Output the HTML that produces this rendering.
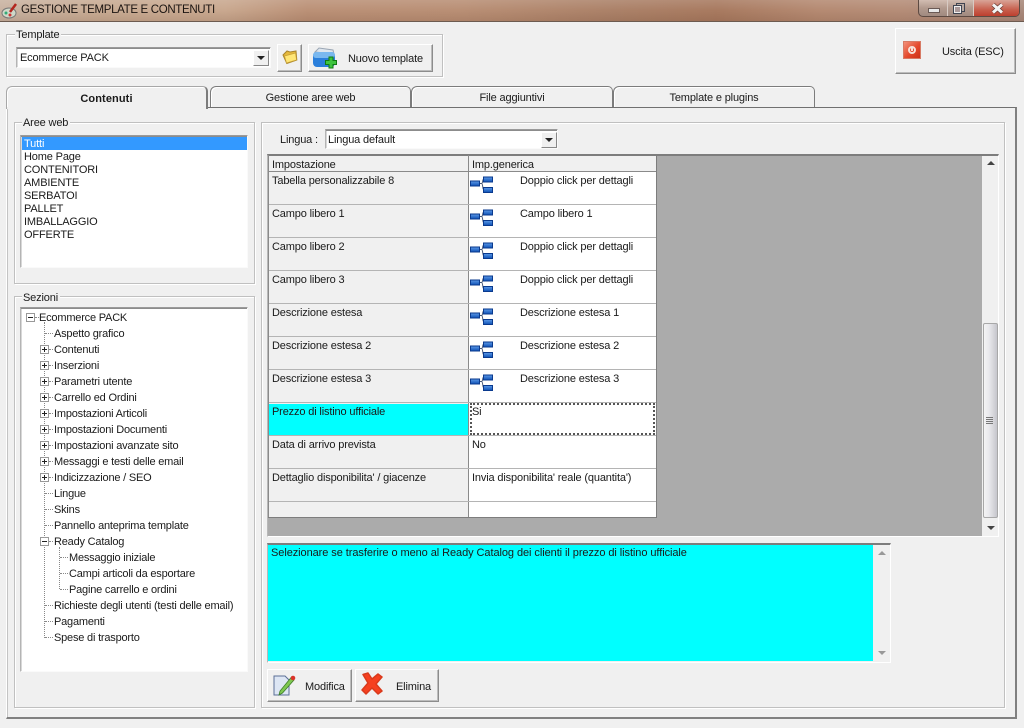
<!DOCTYPE html>
<html><head><meta charset="utf-8"><title>GESTIONE TEMPLATE E CONTENUTI</title>
<style>
html,body{margin:0;padding:0;width:1024px;height:728px;overflow:hidden;background:#f0f0f0}
body{position:relative;font:11px/13px "Liberation Sans",sans-serif;color:#1a1a1a;letter-spacing:-.15px}
div,span.t,svg{position:absolute}
.t{position:absolute;white-space:nowrap;line-height:13px;margin-top:1px}
.tr{letter-spacing:-.2px}
.grp{border:1px solid #c0c0c0;box-shadow:1px 1px 0 #fff,inset 1px 1px 0 #fff;box-sizing:border-box}
.lg{position:absolute;background:#f0f0f0;padding:0 2px 0 1px;white-space:nowrap;line-height:13px;margin-top:1px}
.sunk{background:#fff;box-sizing:border-box;border:1px solid;border-color:#9a9a9a #fafafa #fafafa #b4b4b4;box-shadow:inset 0 1px 0 #8c8c8c,inset 1px 0 0 #d8d8d8}
.btn{background:#f0f0f0;box-sizing:border-box;border:1px solid;border-color:#fff #8c8c8c #8c8c8c #fff;box-shadow:inset -1px -1px 0 #bcbcbc}
.arrow{width:0;height:0;border-left:4px solid transparent;border-right:4px solid transparent;border-top:4px solid #222}
.cbtn{background:#f0f0f0;box-sizing:border-box;border:1px solid;border-color:#fff #888 #888 #fff}
.tab{box-sizing:border-box;background:#f0f0f0;border:1px solid #7c7c7c;border-bottom:none;border-radius:6px 5px 0 0;text-align:center;line-height:23px;box-shadow:inset 1px 1px 0 #fff}
.h{background:#b4b4b4;height:1px}
.v{background:#b4b4b4;width:1px}
.dv{border-left:1px dotted #888;width:0}
.dh{border-top:1px dotted #888;height:0}
.pm{box-sizing:border-box;width:9px;height:9px;border:1px solid #999;background:#fff}
.pm:before{content:"";position:absolute;left:1px;top:3px;width:5px;height:1px;background:#222}
.pl:after{content:"";position:absolute;left:3px;top:1px;width:1px;height:5px;background:#222}
</style></head><body>

<svg width="0" height="0" style="left:0;top:0"><defs>
<linearGradient id="bb" x1="0" y1="0" x2="0" y2="1"><stop offset="0" stop-color="#5f9be8"/><stop offset="1" stop-color="#0c4fb4"/></linearGradient>
<g id="nodes">
<path d="M9.500 9.500h2C13 9.500 12.500 5 13.500 5.500M11.500 9.500C13 9.500 12.500 15 13.500 15.500" fill="none" stroke="#4a5a78" stroke-width="1"/>
<rect x=".5" y="7" width="9" height="5" fill="url(#bb)" stroke="#0a3a8e"/>
<rect x="13.500" y="3" width="9" height="5" fill="url(#bb)" stroke="#0a3a8e"/>
<rect x="13.500" y="13.500" width="9" height="5" fill="url(#bb)" stroke="#0a3a8e"/>
</g></defs></svg>

<!-- title bar -->
<div style="left:0;top:0;width:1024px;height:21px;background:linear-gradient(90deg,#c9b3a2 0,#c8ab93 10%,#c9a88f 22%,#bb9177 30%,#b98f75 45%,#ab8168 60%,#a87a60 70%,#b58a72 80%,#b58d78 88%,#a98a7c 100%)"></div>
<div style="left:0;top:0;width:1024px;height:21px;background:linear-gradient(180deg,rgba(255,255,255,.12),rgba(255,255,255,0) 50%,rgba(80,40,20,.12))"></div>
<div style="left:0;top:21px;width:1024px;height:1px;background:#6d5b50"></div>
<svg style="left:1px;top:2px" width="18" height="18" viewBox="0 0 18 18"><ellipse cx="8" cy="11" rx="7" ry="5" fill="#cfd8c8" stroke="#777"/><circle cx="5" cy="11" r="1.5" fill="#3a7"/><circle cx="9" cy="13" r="1.5" fill="#c33"/><path d="M9 10L15 2" stroke="#b3261e" stroke-width="2.5"/></svg>
<span class="t" style="left:21px;top:3px;font-size:11.5px;color:#1b1411;letter-spacing:-.33px">GESTIONE TEMPLATE E CONTENUTI</span>
<div style="left:918px;top:0;width:102px;height:17px;box-sizing:border-box;border:1px solid #5d4a42;border-top:none;border-radius:0 0 5px 5px;overflow:hidden;background:linear-gradient(180deg,#d2bdb2,#b29a8e 50%,#a08a80)">
<div style="left:28px;top:0;width:1px;height:17px;background:#d8cbc4"></div>
<div style="left:54px;top:0;width:1px;height:17px;background:#d8cbc4"></div>
<div style="left:55px;top:0;width:46px;height:17px;background:linear-gradient(180deg,#d9a497,#c8614f 55%,#bb3a2a)"></div>
<div style="left:9px;top:8px;width:12px;height:5px;background:#e8e8e8;border:1px solid #6a5a55;box-sizing:border-box"></div>
<div style="left:37px;top:3px;width:9px;height:9px;border:1px solid #3f4450;background:#b9aaa2;box-sizing:border-box"></div>
<div style="left:34px;top:5px;width:9px;height:9px;border:1px solid #3f4450;box-shadow:inset 0 0 0 1px #eee;background:#a99;box-sizing:border-box"></div>
</div>
<svg style="left:990px;top:3px" width="15" height="11" viewBox="0 0 15 11"><path d="M3 1.500L12 9.500M12 1.500L3 9.500" stroke="#6b3d34" stroke-width="4.500"/><path d="M3 1.500L12 9.500M12 1.500L3 9.500" stroke="#f4f4f4" stroke-width="3"/></svg>

<!-- template group -->
<div class="grp" style="left:6px;top:34px;width:437px;height:43px"></div>
<span class="lg" style="left:15px;top:28px">Template</span>
<div class="sunk" style="left:16px;top:47px;width:255px;height:21px"></div>
<span class="t" style="left:20px;top:51px">Ecommerce PACK</span>
<div class="cbtn" style="left:253px;top:50px;width:16px;height:16px"><div class="arrow" style="left:3px;top:5px"></div></div>
<div class="btn" style="left:277px;top:44px;width:25px;height:28px"></div>
<svg style="left:282px;top:49px" width="16" height="16" viewBox="0 0 16 16"><path d="M1 6L5 2l3 1 6-1 .8 9-10 3.500z" fill="#e6b93c" stroke="#a8842c"/><path d="M2.500 7L13.500 4l1 7L4.500 14z" fill="#ffe675" stroke="#c79f35" stroke-width=".7"/></svg>
<div class="btn" style="left:308px;top:44px;width:125px;height:28px"></div>
<svg style="left:312px;top:46px" width="25" height="23" viewBox="0 0 25 23"><path d="M3 6L7 2l14 2 1 4z" fill="#dfe6ee" stroke="#9aa6b4"/><rect x="1" y="6" width="22" height="15" rx="4" fill="#2b7fdb"/><rect x="1" y="6" width="22" height="6" rx="3" fill="#7ab8ef"/><path d="M17 11h4v3.500h3.500v4H21V22h-4v-3.500h-3.500v-4H17z" fill="#3ec43e" stroke="#127a12"/></svg>
<span class="t" style="left:348px;top:52px">Nuovo template</span>

<!-- exit -->
<div class="btn" style="left:895px;top:28px;width:121px;height:46px"></div>
<div style="left:903px;top:41px;width:18px;height:18px;background:linear-gradient(135deg,#f2907a,#e4492c 55%,#cc3017);border:1px solid #d77a64;box-sizing:border-box"></div>
<div style="left:908px;top:46px;width:8px;height:8px;border:2px solid #f6e0d8;border-radius:50%;box-sizing:border-box"></div>
<div style="left:911px;top:47px;width:2px;height:4px;background:#f6e0d8"></div>
<span class="t" style="left:942px;top:45px">Uscita (ESC)</span>

<!-- page panel -->
<div style="left:6px;top:107px;width:1011px;height:612px;box-sizing:border-box;border:1px solid #fff;border-top-color:#707070;border-right:2px solid #808080;border-bottom:2px solid #808080;box-shadow:inset 1px 0 0 #c4c4c4"></div>
<div class="tab" style="left:210px;top:86px;width:201px;height:21px">Gestione aree web</div>
<div class="tab" style="left:411px;top:86px;width:202px;height:21px">File aggiuntivi</div>
<div class="tab" style="left:613px;top:86px;width:202px;height:21px">Template e plugins</div>
<div class="tab" style="left:6px;top:86px;width:202px;height:23px;font-weight:bold;letter-spacing:.1px;border-right:2px solid #7c7c7c;border-color:#a8a8a8 #7c7c7c #a8a8a8 #a8a8a8;line-height:24px">Contenuti</div>
<div style="left:7px;top:107px;width:199px;height:2px;background:#f0f0f0"></div>

<!-- aree web -->
<div class="grp" style="left:14px;top:122px;width:241px;height:162px"></div>
<span class="lg" style="left:22px;top:116px">Aree web</span>
<div class="sunk" style="left:20px;top:135px;width:228px;height:133px"></div>
<div style="left:22px;top:137px;width:225px;height:13px;background:#3399ff"></div>
<span class="t" style="left:24px;top:137px;color:#fff">Tutti</span>
<span class="t" style="left:24px;top:150px">Home Page</span>
<span class="t" style="left:24px;top:163px">CONTENITORI</span>
<span class="t" style="left:24px;top:176px">AMBIENTE</span>
<span class="t" style="left:24px;top:189px">SERBATOI</span>
<span class="t" style="left:24px;top:202px">PALLET</span>
<span class="t" style="left:24px;top:215px">IMBALLAGGIO</span>
<span class="t" style="left:24px;top:228px">OFFERTE</span>

<!-- sezioni -->
<div class="grp" style="left:14px;top:296px;width:241px;height:412px"></div>
<span class="lg" style="left:22px;top:291px">Sezioni</span>
<div class="sunk" style="left:20px;top:307px;width:228px;height:365px"></div>
<div class="dv" style="left:44px;top:322px;height:316px"></div>
<div class="dv" style="left:59px;top:547px;height:42px"></div>
<div class="dh" style="left:35px;top:317px;width:4px"></div>
<div class="dh" style="left:45px;top:333px;width:8px"></div><div class="dh" style="left:49px;top:349px;width:4px"></div><div class="dh" style="left:49px;top:365px;width:4px"></div><div class="dh" style="left:49px;top:381px;width:4px"></div><div class="dh" style="left:49px;top:397px;width:4px"></div><div class="dh" style="left:49px;top:413px;width:4px"></div><div class="dh" style="left:49px;top:429px;width:4px"></div><div class="dh" style="left:49px;top:445px;width:4px"></div><div class="dh" style="left:49px;top:461px;width:4px"></div><div class="dh" style="left:49px;top:477px;width:4px"></div>
<div class="dh" style="left:45px;top:493px;width:8px"></div><div class="dh" style="left:45px;top:509px;width:8px"></div><div class="dh" style="left:45px;top:525px;width:8px"></div><div class="dh" style="left:49px;top:541px;width:4px"></div>
<div class="dh" style="left:60px;top:557px;width:8px"></div><div class="dh" style="left:60px;top:573px;width:8px"></div><div class="dh" style="left:60px;top:589px;width:8px"></div>
<div class="dh" style="left:45px;top:605px;width:8px"></div><div class="dh" style="left:45px;top:621px;width:8px"></div><div class="dh" style="left:45px;top:637px;width:8px"></div>
<div class="pm" style="left:26px;top:313px"></div>
<div class="pm pl" style="left:40px;top:345px"></div><div class="pm pl" style="left:40px;top:361px"></div><div class="pm pl" style="left:40px;top:377px"></div><div class="pm pl" style="left:40px;top:393px"></div><div class="pm pl" style="left:40px;top:409px"></div><div class="pm pl" style="left:40px;top:425px"></div><div class="pm pl" style="left:40px;top:441px"></div><div class="pm pl" style="left:40px;top:457px"></div><div class="pm pl" style="left:40px;top:473px"></div>
<div class="pm" style="left:40px;top:537px"></div>
<span class="t tr" style="left:39px;top:311px">Ecommerce PACK</span>
<span class="t tr" style="left:54px;top:327px">Aspetto grafico</span>
<span class="t tr" style="left:54px;top:343px">Contenuti</span>
<span class="t tr" style="left:54px;top:359px">Inserzioni</span>
<span class="t tr" style="left:54px;top:375px">Parametri utente</span>
<span class="t tr" style="left:54px;top:391px">Carrello ed Ordini</span>
<span class="t tr" style="left:54px;top:407px">Impostazioni Articoli</span>
<span class="t tr" style="left:54px;top:423px">Impostazioni Documenti</span>
<span class="t tr" style="left:54px;top:439px">Impostazioni avanzate sito</span>
<span class="t tr" style="left:54px;top:455px">Messaggi e testi delle email</span>
<span class="t tr" style="left:54px;top:471px">Indicizzazione / SEO</span>
<span class="t tr" style="left:54px;top:487px">Lingue</span>
<span class="t tr" style="left:54px;top:503px">Skins</span>
<span class="t tr" style="left:54px;top:519px">Pannello anteprima template</span>
<span class="t tr" style="left:54px;top:535px">Ready Catalog</span>
<span class="t tr" style="left:69px;top:551px">Messaggio iniziale</span>
<span class="t tr" style="left:69px;top:567px">Campi articoli da esportare</span>
<span class="t tr" style="left:69px;top:583px">Pagine carrello e ordini</span>
<span class="t tr" style="left:54px;top:599px">Richieste degli utenti (testi delle email)</span>
<span class="t tr" style="left:54px;top:615px">Pagamenti</span>
<span class="t tr" style="left:54px;top:631px">Spese di trasporto</span>

<!-- right group -->
<div class="grp" style="left:261px;top:122px;width:744px;height:586px"></div>
<span class="t" style="left:280px;top:133px">Lingua :</span>
<div class="sunk" style="left:325px;top:129px;width:233px;height:20px"></div>
<span class="t" style="left:328px;top:133px">Lingua default</span>
<div class="cbtn" style="left:541px;top:132px;width:16px;height:16px"><div class="arrow" style="left:3px;top:5px"></div></div>

<!-- grid -->
<div style="left:267px;top:154px;width:732px;height:383px;box-sizing:border-box;background:#ababab;border-top:2px solid #7d7d7d;border-left:1px solid #b8b8b8;border-right:1px solid #fff;border-bottom:1px solid #fff"></div>
<div style="left:269px;top:156px;width:199px;height:362px;background:#f0f0f0"></div>
<div style="left:469px;top:156px;width:187px;height:362px;background:#fff"></div>
<div style="left:269px;top:156px;width:387px;height:15px;background:#f0f0f0"></div>
<div style="left:269px;top:404px;width:199px;height:31px;background:#00ffff"></div>
<div class="v" style="left:268px;top:155px;height:363px;background:#8a8a8a"></div>
<div class="v" style="left:468px;top:155px;height:363px;background:#8a8a8a"></div>
<div class="v" style="left:656px;top:155px;height:363px;background:#7d7d7d"></div>
<div style="left:268px;top:517px;width:389px;height:1px;background:#7d7d7d"></div>
<div class="h" style="left:269px;top:171px;width:387px;background:#8a8a8a"></div>
<div class="h" style="left:269px;top:204px;width:387px"></div>
<div class="h" style="left:269px;top:237px;width:387px"></div>
<div class="h" style="left:269px;top:270px;width:387px"></div>
<div class="h" style="left:269px;top:303px;width:387px"></div>
<div class="h" style="left:269px;top:336px;width:387px"></div>
<div class="h" style="left:269px;top:369px;width:387px"></div>
<div class="h" style="left:269px;top:402px;width:387px"></div>
<div class="h" style="left:269px;top:435px;width:387px"></div>
<div class="h" style="left:269px;top:468px;width:387px"></div>
<div class="h" style="left:269px;top:501px;width:387px"></div>
<div style="left:470px;top:403px;width:185px;height:32px;box-sizing:border-box;border:2px dotted #555"></div>

<span class="t" style="left:272px;top:158px">Impostazione</span><span class="t" style="left:472px;top:158px">Imp.generica</span>
<span class="t" style="left:272px;top:174px">Tabella personalizzabile 8</span>
<span class="t" style="left:272px;top:207px">Campo libero 1</span>
<span class="t" style="left:272px;top:240px">Campo libero 2</span>
<span class="t" style="left:272px;top:273px">Campo libero 3</span>
<span class="t" style="left:272px;top:306px">Descrizione estesa</span>
<span class="t" style="left:272px;top:339px">Descrizione estesa 2</span>
<span class="t" style="left:272px;top:372px">Descrizione estesa 3</span>
<span class="t" style="left:272px;top:405px">Prezzo di listino ufficiale</span>
<span class="t" style="left:272px;top:438px">Data di arrivo prevista</span>
<span class="t" style="left:272px;top:471px">Dettaglio disponibilita' / giacenze</span>

<span class="t" style="left:520px;top:174px">Doppio click per dettagli</span>
<span class="t" style="left:520px;top:207px">Campo libero 1</span>
<span class="t" style="left:520px;top:240px">Doppio click per dettagli</span>
<span class="t" style="left:520px;top:273px">Doppio click per dettagli</span>
<span class="t" style="left:520px;top:306px">Descrizione estesa 1</span>
<span class="t" style="left:520px;top:339px">Descrizione estesa 2</span>
<span class="t" style="left:520px;top:372px">Descrizione estesa 3</span>
<span class="t" style="left:472px;top:405px">Si</span>
<span class="t" style="left:472px;top:438px">No</span>
<span class="t" style="left:472px;top:471px">Invia disponibilita' reale (quantita')</span>

<svg style="left:470px;top:174px" width="24" height="19"><use href="#nodes"/></svg>
<svg style="left:470px;top:207px" width="24" height="19"><use href="#nodes"/></svg>
<svg style="left:470px;top:240px" width="24" height="19"><use href="#nodes"/></svg>
<svg style="left:470px;top:273px" width="24" height="19"><use href="#nodes"/></svg>
<svg style="left:470px;top:306px" width="24" height="19"><use href="#nodes"/></svg>
<svg style="left:470px;top:339px" width="24" height="19"><use href="#nodes"/></svg>
<svg style="left:470px;top:372px" width="24" height="19"><use href="#nodes"/></svg>

<!-- grid scrollbar -->
<div style="left:982px;top:156px;width:16px;height:380px;background:#f0f0f0"></div>
<div style="left:987px;top:161px;width:0;height:0;border-left:4px solid transparent;border-right:4px solid transparent;border-bottom:4px solid #444"></div>
<div style="left:987px;top:526px;width:0;height:0;border-left:4px solid transparent;border-right:4px solid transparent;border-top:4px solid #444"></div>
<div style="left:983px;top:323px;width:15px;height:195px;box-sizing:border-box;border:1px solid #a8a8a8;border-radius:2px;background:linear-gradient(90deg,#f4f4f4,#e8e8ec 40%,#c6c6cc)"></div>
<div style="left:986px;top:417px;width:7px;height:1px;background:#777"></div>
<div style="left:986px;top:419px;width:7px;height:1px;background:#777"></div>
<div style="left:986px;top:421px;width:7px;height:1px;background:#777"></div>
<div style="left:986px;top:423px;width:7px;height:1px;background:#777"></div>

<!-- memo -->
<div style="left:267px;top:543px;width:624px;height:120px;box-sizing:border-box;background:#f0f0f0;border:1px solid;border-color:#7d7d7d #fff #fff #b8b8b8;border-top-width:2px"></div>
<div style="left:268px;top:545px;width:605px;height:116px;background:#00ffff"></div>
<span class="t" style="left:271px;top:546px;letter-spacing:-.07px">Selezionare se trasferire o meno al Ready Catalog dei clienti il prezzo di listino ufficiale</span>
<div style="left:878px;top:551px;width:0;height:0;border-left:4px solid transparent;border-right:4px solid transparent;border-bottom:4px solid #999"></div>
<div style="left:878px;top:651px;width:0;height:0;border-left:4px solid transparent;border-right:4px solid transparent;border-top:4px solid #999"></div>

<!-- buttons -->
<div class="btn" style="left:267px;top:669px;width:85px;height:33px"></div>
<svg style="left:273px;top:673px" width="24" height="24" viewBox="0 0 24 24"><path d="M1 3h11l4 4v15H1z" fill="#dde6f4" stroke="#5b6f96"/><path d="M7 18l-1 4 3.500-2L21 7l-2.500-3z" fill="#7ec850" stroke="#3d7d2a" stroke-width=".8"/><circle cx="20" cy="5" r="2.300" fill="#d9342b"/></svg>
<span class="t" style="left:305px;top:680px">Modifica</span>
<div class="btn" style="left:355px;top:669px;width:84px;height:33px"></div>
<svg style="left:360px;top:672px" width="24" height="24" viewBox="0 0 24 24"><path d="M3 2.500L8 1l4 6 6-5 4 3-6 7 6 7-4 3-6-6-6 6-4-4 6-7z" fill="#f6401f" stroke="#d93a1c" stroke-linejoin="round" stroke-width="1.500"/></svg>
<span class="t" style="left:396px;top:680px">Elimina</span>

</body></html>
